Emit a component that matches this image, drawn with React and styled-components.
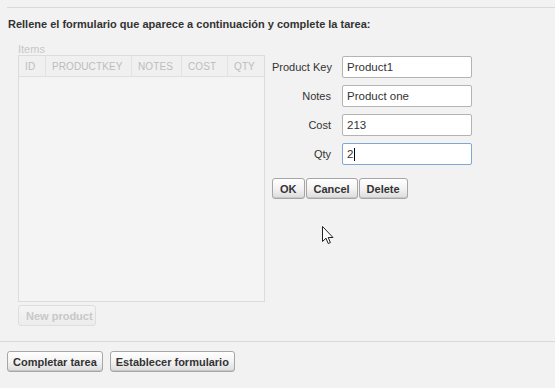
import React from "react";
import styled, { createGlobalStyle } from "styled-components";

const Global = createGlobalStyle`
  html, body { margin: 0; padding: 0; background: #f2f2f2; }
  body { font-family: "Liberation Sans", Arial, sans-serif; color: #333; }
`;

const Page = styled.div`
  position: relative;
  width: 555px;
  height: 388px;
  padding-top: 7px;
  box-sizing: border-box;
  overflow: hidden;
`;

const Rule = styled.div`
  margin-left: ${(p) => p.$inset || 0}px;
  margin-top: ${(p) => p.$top || 0}px;
  border-top: 1px solid #d9d9d9;
`;

const Heading = styled.div`
  margin: 9px 0 0 8px;
  font-size: 11px;
  line-height: 14px;
  font-weight: bold;
  color: #333;
`;

const Work = styled.div`
  display: flex;
  align-items: flex-start;
  margin-top: 13px;
  padding-left: 18px;
`;

const LeftCol = styled.div`
  display: flex;
  flex-direction: column;
  align-items: flex-start;
  width: 247px;
`;

const ItemsLabel = styled.div`
  font-size: 11px;
  line-height: 11px;
  height: 11px;
  color: #c8c8c8;
`;

const Table = styled.div`
  width: 247px;
  height: 247px;
  box-sizing: border-box;
  border: 1px solid #dcdcdc;
  background: #f4f4f4;
`;

const HeaderRow = styled.div`
  display: grid;
  grid-template-columns: 26px 86px 50px 46px 1fr;
  height: 20px;
  border-bottom: 1px solid #e0e0e0;
  background: #f0f0f0;
`;

const HeadCell = styled.div`
  display: flex;
  align-items: center;
  padding-left: 6px;
  font-size: 10px;
  color: #bcbcbc;
  border-left: ${(p) => (p.$first ? "none" : "1px solid #e2e2e2")};
  letter-spacing: 0.1px;
`;

const Button = styled.button`
  height: 21px;
  min-width: ${(p) => p.$min || 0}px;
  margin: 0;
  padding: 0 ${(p) => p.$pad || 7}px;
  box-sizing: border-box;
  font-family: "Liberation Sans", Arial, sans-serif;
  font-size: 11px;
  font-weight: bold;
  color: ${(p) => (p.disabled ? "#c8c8c8" : "#333")};
  border: 1px solid ${(p) => (p.disabled ? "#dedede" : "#a6a6a6")};
  border-radius: 3px;
  background: ${(p) =>
    p.disabled
      ? "linear-gradient(#f4f4f4, #ececec)"
      : "linear-gradient(#ffffff 0%, #f3f3f3 50%, #dcdcdc 100%)"};
  box-shadow: ${(p) => (p.disabled ? "none" : "inset 0 -1px 0 #c8c8c8")};
  cursor: default;
  white-space: nowrap;
`;

const NewButton = styled(Button)`
  margin-top: 3px;
  width: 78px;
  text-align: left;
`;

const RightCol = styled.div`
  margin-left: 7px;
  padding-top: 12px;
`;

const FormGrid = styled.div`
  display: grid;
  grid-template-columns: 59px 130px;
  column-gap: 11px;
  row-gap: 7px;
  grid-auto-rows: 22px;
  align-items: center;
`;

const Label = styled.label`
  font-size: 11px;
  text-align: right;
  white-space: nowrap;
  color: #333;
`;

const Input = styled.div`
  height: 22px;
  box-sizing: border-box;
  display: flex;
  align-items: center;
  padding-left: 4px;
  font-size: 11.5px;
  color: #333;
  background: #fff;
  border: 1px solid ${(p) => (p.$focus ? "#7fa6d4" : "#b4b4b4")};
  border-radius: 2px;
`;

const Caret = styled.span`
  display: inline-block;
  width: 1px;
  height: 13px;
  background: #000;
  margin-left: 1px;
`;

const ButtonRow = styled.div`
  display: flex;
  gap: ${(p) => p.$gap || 0}px;
  margin-top: ${(p) => p.$top || 0}px;
  padding-left: ${(p) => p.$left || 0}px;
`;

const Pointer = styled.svg`
  position: absolute;
  left: 322px;
  top: 226px;
`;

export default function App() {
  return (
    <>
      <Global />
      <Page>
        <Rule $inset={7} />
        <Heading>Rellene el formulario que aparece a continuación y complete la tarea:</Heading>
        <Work>
          <LeftCol>
            <ItemsLabel>Items</ItemsLabel>
            <Table>
              <HeaderRow>
                <HeadCell $first>ID</HeadCell>
                <HeadCell>PRODUCTKEY</HeadCell>
                <HeadCell>NOTES</HeadCell>
                <HeadCell>COST</HeadCell>
                <HeadCell>QTY</HeadCell>
              </HeaderRow>
            </Table>
            <NewButton disabled>New product</NewButton>
          </LeftCol>
          <RightCol>
            <FormGrid>
              <Label>Product Key</Label>
              <Input>Product1</Input>
              <Label>Notes</Label>
              <Input>Product one</Input>
              <Label>Cost</Label>
              <Input>213</Input>
              <Label>Qty</Label>
              <Input $focus>
                2<Caret />
              </Input>
            </FormGrid>
            <ButtonRow $top={13} $gap={1}>
              <Button $pad={7} $min={32}>OK</Button>
              <Button $pad={7}>Cancel</Button>
              <Button $pad={7}>Delete</Button>
            </ButtonRow>
          </RightCol>
        </Work>
        <Rule $top={15} />
        <ButtonRow $top={9} $gap={7} $left={7}>
          <Button $pad={5}>Completar tarea</Button>
          <Button $pad={5}>Establecer formulario</Button>
        </ButtonRow>
        <Pointer width="12" height="19" viewBox="0 0 12 19">
          <path
            d="M0.5 0.5 L0.5 15.5 L4 12.2 L6.2 17.5 L8.4 16.6 L6.2 11.5 L11 11.5 Z"
            fill="#fff"
            stroke="#222"
            strokeWidth="1"
            strokeLinejoin="miter"
          />
        </Pointer>
      </Page>
    </>
  );
}
